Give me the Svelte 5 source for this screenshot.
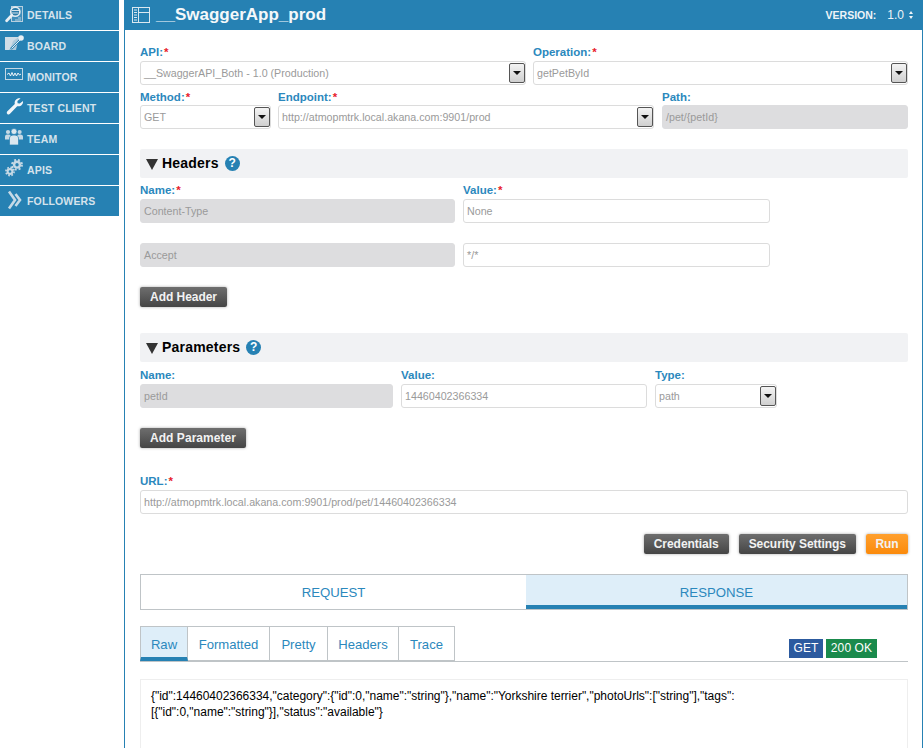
<script>
  const nav = ['DETAILS','BOARD','MONITOR','TEST CLIENT','TEAM','APIS','FOLLOWERS'];
  const subtabs = [['Raw',48],['Formatted',82],['Pretty',58],['Headers',71],['Trace',56]];
</script>

{#snippet navIcon(i)}
  <svg class="nicon" viewBox="0 0 26 30" width="26" height="30" aria-hidden="true">
    {#if i===0}
      <rect x="11.5" y="6.5" width="11" height="15" fill="#3f8ebb" stroke="#b7cfde" stroke-width="1"/>
      <path d="M18 18h3M15 20h6" stroke="#b7cfde" stroke-width="1"/>
      <circle cx="15.3" cy="11.7" r="4.6" fill="#2a7ba8" stroke="#e3ecf2" stroke-width="1.6"/>
      <path d="M12 10.5h7M11.5 13h7" stroke="#d5e3ec" stroke-width="1"/>
      <path d="M11.8 15.3 L6.6 20.8" stroke="#e8eff4" stroke-width="2.8" stroke-linecap="round"/>
    {:else if i===1}
      <path d="M5 6 H19 L14 11 L9.5 19 H5 Z" fill="#cfdde7"/>
      <path d="M13 10 L19 6 L16 19 H10 Z" fill="#aecadb"/>
      <path d="M11 18 L20 9" stroke="#2681b3" stroke-width="2.2"/>
      <path d="M11.5 17.5 L20 9" stroke="#e8eff4" stroke-width="1"/>
      <circle cx="21" cy="7" r="2.8" fill="#e8eff4"/>
    {:else if i===2}
      <rect x="5.5" y="6.5" width="17" height="11" fill="none" stroke="#c3d7e4" stroke-width="1"/>
      <path d="M7 12.5 L9 11 L10.5 14 L12 10.5 L13.5 14 L15 11 L16.5 14 L18 11 L19.5 13 L21 12" fill="none" stroke="#eef4f8" stroke-width="1"/>
    {:else if i===3}
      <path d="M20.5 5.4 L17.4 8 L17.6 10.2 L19.8 10.6 L23 8 C23.4 11.6 20.6 14 17.2 13.2 L10 20.8 C8.2 22.6 5.6 20.2 7.4 18.2 L14.8 11 C14 7.6 17 4.6 20.5 5.4 Z" fill="#f2f6f9"/>
    {:else if i===4}
      <g fill="#c6d9e5">
        <circle cx="8" cy="8" r="2.1"/><circle cx="19.6" cy="8" r="2.1"/>
        <path d="M5 15.5 V12.5 C5 11 6.5 10.6 8 10.6 C9.5 10.6 11 11 11 12.5 V15.5 Z"/>
        <path d="M17 15.5 V12.5 C17 11 18.4 10.6 19.8 10.6 C21.2 10.6 23 11 23 12.5 V15.5 Z"/>
      </g>
      <g fill="#dbe7ee" stroke="#2681b3" stroke-width=".7">
        <circle cx="14" cy="7.5" r="3"/>
        <path d="M9.5 21 V14 C9.5 12 11.5 11 14 11 C16.5 11 18.5 12 18.5 14 V21 Z"/>
      </g>
    {:else if i===5}
      <g fill="none" stroke="#c6d9e5">
        <circle cx="17" cy="9.7" r="2.9" stroke-width="2.4"/>
        <circle cx="17" cy="9.7" r="5" stroke-width="1.8" stroke-dasharray="2 2"/>
        <circle cx="10" cy="16.5" r="2.4" stroke-width="2.1"/>
        <circle cx="10" cy="16.5" r="4.1" stroke-width="1.6" stroke-dasharray="1.7 1.5"/>
      </g>
    {:else}
      <path d="M9 5.5 L15 14 L9 22.5 M15.5 8 L20 14 L15.5 20" fill="none" stroke="#c5d9e6" stroke-width="2.6"/>
    {/if}
  </svg>
{/snippet}

{#snippet select(label, value, req, cls)}
  <div class="field {cls}">
    <span class="lbl">{label}:{#if req}<i>*</i>{/if}</span>
    <div class="ctl sel">
      <span class="val">{value}</span>
      <span class="arrow"><b></b></span>
    </div>
  </div>
{/snippet}

{#snippet input(label, value, req, cls, disabled)}
  <div class="field {cls}">
    {#if label}<span class="lbl">{label}:{#if req}<i>*</i>{/if}</span>{/if}
    <div class="ctl" class:dis={disabled}><span class="val">{value}</span></div>
  </div>
{/snippet}

{#snippet section(title)}
  <div class="bar">
    <span class="tri"></span>
    <h3>{title}</h3>
    <span class="help">?</span>
  </div>
{/snippet}

<div class="page">
  <nav class="side">
    {#each nav as n, i}
      <div class="item">
        {@render navIcon(i)}
        <span>{n}</span>
      </div>
    {/each}
  </nav>

  <main class="main">
    <header class="head">
      <svg width="18" height="16" viewBox="0 0 18 16" aria-hidden="true">
        <rect x="0.5" y="0.5" width="17" height="15" fill="none" stroke="#dbe8f0"/>
        <path d="M6.5 1V15M7 5.5H17" stroke="#dbe8f0" fill="none"/>
        <path d="M2 3h3M2 5.5h3M2 8h3M2 10.5h3M2 13h3" stroke="#dbe8f0" stroke-width="1.2"/>
      </svg>
      <h1>__SwaggerApp_prod</h1>
      <span class="ver">VERSION:</span>
      <span class="vernum">1.0</span>
      <span class="updown"><b></b><b></b></span>
    </header>

    <div class="form">
      <div class="row r1">
        {@render select('API','__SwaggerAPI_Both - 1.0 (Production)',true,'w-api')}
        {@render select('Operation','getPetById',true,'w-op')}
      </div>
      <div class="row r2">
        {@render select('Method','GET',true,'w-method')}
        {@render select('Endpoint','http://atmopmtrk.local.akana.com:9901/prod',true,'w-end')}
        {@render input('Path','/pet/{petId}',false,'w-path',true)}
      </div>

      <div class="sec1">{@render section('Headers')}</div>
      <div class="row r3">
        {@render input('Name','Content-Type',true,'w-hn',true)}
        {@render input('Value','None',true,'w-hv',false)}
      </div>
      <div class="row r4">
        {@render input('','Accept',false,'w-hn',true)}
        {@render input('','*/*',false,'w-hv',false)}
      </div>
      <button class="btn add1">Add Header</button>

      <div class="sec2">{@render section('Parameters')}</div>
      <div class="row r5">
        {@render input('Name','petId',false,'w-pn',true)}
        {@render input('Value','14460402366334',false,'w-pv',false)}
        {@render select('Type','path',false,'w-pt')}
      </div>
      <button class="btn add2">Add Parameter</button>

      <div class="url">
        {@render input('URL','http://atmopmtrk.local.akana.com:9901/prod/pet/14460402366334',true,'w-url',false)}
      </div>

      <div class="actions">
        <button class="btn">Credentials</button>
        <button class="btn">Security Settings</button>
        <button class="btn run">Run</button>
      </div>

      <div class="tabs">
        <div class="tab first">REQUEST</div>
        <div class="tab on">RESPONSE</div>
      </div>

      <div class="subrow">
        {#each subtabs as [t, w], i}
          <div class="sub" class:on={i===0} style:width="{w}px">{t}</div>
        {/each}
        <div class="badges">
          <span class="bdg get">GET</span>
          <span class="bdg ok">200 OK</span>
        </div>
      </div>

      <div class="resp">{'{"id":14460402366334,"category":{"id":0,"name":"string"},"name":"Yorkshire terrier","photoUrls":["string"],"tags":'}<br>{'[{"id":0,"name":"string"}],"status":"available"}'}</div>
    </div>
  </main>
</div>

<style>
  :global(body){margin:0;background:#fff;font-family:"Liberation Sans",Arial,sans-serif;overflow:hidden}
  .page{display:flex;width:924px;height:748px;overflow:hidden}
  .side{width:119px;flex:none;margin-right:5px;display:flex;flex-direction:column;gap:1px}
  .item{height:30px;background:#2681b3;display:flex;align-items:center;color:#d5e3ec;font-size:10.5px;font-weight:bold;letter-spacing:.15px;box-sizing:border-box}
  .nicon{flex:none;display:block}
  .item span{padding-left:1px}
  .main{flex:none;width:799px;box-sizing:border-box;border-left:1px solid #2681b3;border-right:1px solid #2681b3;height:748px;overflow:hidden}
  .head{height:30px;background:#2681b3;display:flex;align-items:center;color:#fff;padding-left:7px;box-sizing:border-box}
  .head h1{margin:0 0 0 6px;font-size:17px;font-weight:bold;color:#f4f8fa;flex:1;line-height:30px}
  .ver{font-size:10.5px;font-weight:bold;color:#eef4f8;margin-right:11px}
  .vernum{font-size:12px;color:#eef4f8;margin-right:5px}
  .updown{display:flex;flex-direction:column;gap:2px;margin-right:9px}
  .updown b{display:block;width:0;height:0;border-left:2.5px solid transparent;border-right:2.5px solid transparent;border-bottom:3px solid #eef4f8}
  .updown b+b{border-bottom:0;border-top:3px solid #eef4f8}
  .form{padding:0 14px 0 15px;box-sizing:border-box}
  .row{display:flex}
  .r1{margin-top:15px;gap:7px}
  .r2{margin-top:4px;gap:7px}
  .r3{margin-top:5px;gap:8px}
  .r4{margin-top:20px;gap:8px}
  .r5{margin-top:6px;gap:8px}
  .field{display:flex;flex-direction:column;flex:none}
  .lbl{height:16px;line-height:15px;font-size:11.5px;font-weight:bold;color:#2b88bd}
  .r2 .lbl{line-height:16px}
  .lbl i{color:#e8202a;font-style:normal;margin-left:1px}
  .ctl{height:24px;box-sizing:border-box;border:1px solid #dcdcdc;border-radius:3px;background:#fff;display:flex;align-items:center;padding-left:3px;font-size:10.7px;color:#9a9a9a;position:relative;overflow:hidden}
  .ctl.dis{background:#dddddf;border-color:#dddddf}
  .val{white-space:nowrap}
  .sel{padding-right:18px}
  .arrow{position:absolute;right:0;top:1px;bottom:1px;width:16px;box-sizing:border-box;border:1px solid #555;border-radius:2px;background:linear-gradient(#f4f4f4,#cfcfcf);display:flex;align-items:center;justify-content:center}
  .arrow b{width:0;height:0;border-left:4px solid transparent;border-right:4px solid transparent;border-top:4px solid #111}
  .w-api{width:386px}.w-op{width:375px}
  .w-method{width:131px}.w-end{width:376px}.w-path{width:246px;margin-left:1px}
  .w-hn{width:315px}.w-hv{width:307px}
  .w-pn{width:253px}.w-pv{width:246px}.w-pt{width:122px}
  .w-url{width:768px}
  .sec1{margin-top:20px}
  .sec2{margin-top:26px}
  .bar{height:29px;background:#f1f2f4;display:flex;align-items:center;padding-left:6px;border-radius:2px}
  .tri{width:0;height:0;border-left:6px solid transparent;border-right:6px solid transparent;border-top:11px solid #333;margin-top:2px}
  .bar h3{margin:0 0 2px 4px;font-size:14px;font-weight:bold;color:#000;letter-spacing:.2px}
  .help{width:15px;height:15px;border-radius:50%;background:#2681b3;color:#fff;font-size:12px;font-weight:bold;line-height:15px;text-align:center;margin-left:6px}
  .btn{height:20px;border:0;border-radius:2px;padding:0 10px;font:bold 12px "Liberation Sans",Arial,sans-serif;letter-spacing:-.04px;color:#f2f2f2;background:linear-gradient(#6e6e6e,#454545);box-shadow:0 0 3px rgba(0,0,0,.35);display:block}
  .add1{margin-top:20px}
  .add2{margin-top:20px;letter-spacing:.05px}
  .url{margin-top:26px}
  .actions{margin-top:20px;display:flex;justify-content:flex-end;gap:10px}
  .btn.run{background:linear-gradient(#ffa02e,#fb8a0b);padding:0;width:42px}
  .tabs{margin-top:20px;display:flex;height:36px;box-sizing:border-box;border:1px solid #bfc4c7}
  .tab{flex:1;display:flex;align-items:center;justify-content:center;font-size:13.2px;color:#2b88bd;box-sizing:border-box;padding-top:1px}
  .tab.first{flex:none;width:385px}
  .tab.on{background:#deeef9;border-bottom:4px solid #2681b3;padding-top:4px}
  .subrow{margin-top:16px;display:flex;height:36px;box-sizing:border-box;border-bottom:1px solid #bfc4c7;position:relative}
  .sub{box-sizing:border-box;height:35px;border:1px solid #bfc4c7;border-left:0;display:flex;align-items:center;justify-content:center;font-size:13.1px;color:#2b88bd;padding-top:1px}
  .sub:first-child{border-left:1px solid #bfc4c7}
  .sub.on{background:#deeef9;border-bottom:4px solid #2681b3;padding-top:4px}
  .badges{position:absolute;right:31px;top:13px;display:flex;gap:3px}
  .bdg{height:19px;line-height:19px;font-size:12px;color:#fff;box-sizing:border-box;text-align:center;letter-spacing:.1px}
  .get{background:#2c5a9f;width:34px}.ok{background:#1a8a4c;width:51px}
  .resp{margin-top:17px;height:100px;box-sizing:border-box;border:1px solid #eeeeee;padding:9px 10px;font-size:12px;line-height:15.5px;color:#000;letter-spacing:-.02px}
</style>
